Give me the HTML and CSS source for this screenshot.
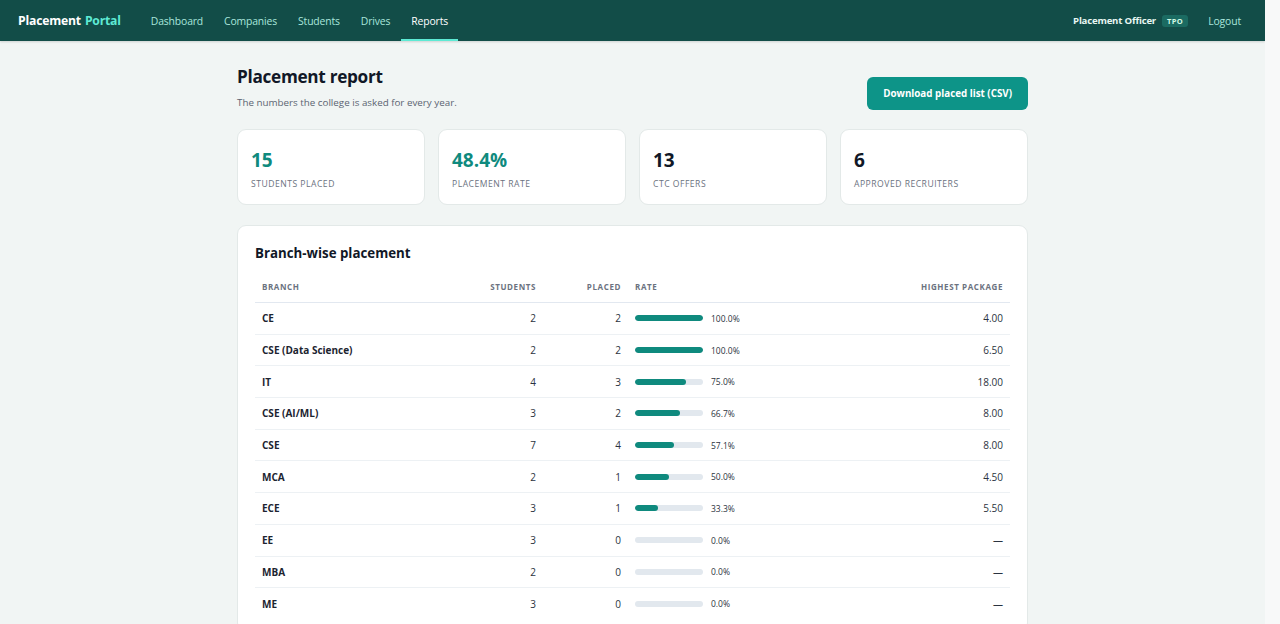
FILE: index.html
```html
<!DOCTYPE html>
<html lang="en">

<head>
  <meta charset="UTF-8">
  <meta name="viewport" content="width=device-width, initial-scale=1.0">
  <title>Placement report</title>
  <link rel="stylesheet" href="styles.css">
</head>

<body>
  <!-- Top navigation -->
  <header class="topbar">
    <div class="brand">Placement <span>Portal</span></div>
    <nav class="nav">
      <a href="#">Dashboard</a>
      <a href="#">Companies</a>
      <a href="#">Students</a>
      <a href="#">Drives</a>
      <a href="#" class="active">Reports</a>
    </nav>
    <div class="user">
      <span class="user-name">Placement Officer</span>
      <span class="role">TPO</span>
      <a href="#" class="logout">Logout</a>
    </div>
  </header>

  <main class="page">
    <div class="page-head">
      <div>
        <h1>Placement report</h1>
        <p class="sub">The numbers the college is asked for every year.</p>
      </div>
      <button class="btn">Download placed list (CSV)</button>
    </div>

    <!-- Summary cards -->
    <div class="stats">
      <div class="stat">
        <div class="stat-value teal">15</div>
        <div class="stat-label">Students placed</div>
      </div>
      <div class="stat">
        <div class="stat-value teal">48.4%</div>
        <div class="stat-label">Placement rate</div>
      </div>
      <div class="stat">
        <div class="stat-value">13</div>
        <div class="stat-label">CTC offers</div>
      </div>
      <div class="stat">
        <div class="stat-value">6</div>
        <div class="stat-label">Approved recruiters</div>
      </div>
    </div>

    <!-- Branch table -->
    <section class="card">
      <h2>Branch-wise placement</h2>
      <table class="report">
        <thead>
          <tr>
            <th class="col-branch">Branch</th>
            <th class="num">Students</th>
            <th class="num">Placed</th>
            <th class="col-rate">Rate</th>
            <th class="num">Highest package</th>
          </tr>
        </thead>
        <tbody>
          <tr>
            <td class="branch">CE</td><td class="num">2</td><td class="num">2</td>
            <td><div class="rate"><div class="bar"><div class="fill" style="width:100%"></div></div><span>100.0%</span></div></td>
            <td class="num">4.00</td>
          </tr>
          <tr>
            <td class="branch">CSE (Data Science)</td><td class="num">2</td><td class="num">2</td>
            <td><div class="rate"><div class="bar"><div class="fill" style="width:100%"></div></div><span>100.0%</span></div></td>
            <td class="num">6.50</td>
          </tr>
          <tr>
            <td class="branch">IT</td><td class="num">4</td><td class="num">3</td>
            <td><div class="rate"><div class="bar"><div class="fill" style="width:75%"></div></div><span>75.0%</span></div></td>
            <td class="num">18.00</td>
          </tr>
          <tr>
            <td class="branch">CSE (AI/ML)</td><td class="num">3</td><td class="num">2</td>
            <td><div class="rate"><div class="bar"><div class="fill" style="width:66.7%"></div></div><span>66.7%</span></div></td>
            <td class="num">8.00</td>
          </tr>
          <tr>
            <td class="branch">CSE</td><td class="num">7</td><td class="num">4</td>
            <td><div class="rate"><div class="bar"><div class="fill" style="width:57.1%"></div></div><span>57.1%</span></div></td>
            <td class="num">8.00</td>
          </tr>
          <tr>
            <td class="branch">MCA</td><td class="num">2</td><td class="num">1</td>
            <td><div class="rate"><div class="bar"><div class="fill" style="width:50%"></div></div><span>50.0%</span></div></td>
            <td class="num">4.50</td>
          </tr>
          <tr>
            <td class="branch">ECE</td><td class="num">3</td><td class="num">1</td>
            <td><div class="rate"><div class="bar"><div class="fill" style="width:33.3%"></div></div><span>33.3%</span></div></td>
            <td class="num">5.50</td>
          </tr>
          <tr>
            <td class="branch">EE</td><td class="num">3</td><td class="num">0</td>
            <td><div class="rate"><div class="bar"><div class="fill" style="width:0%"></div></div><span>0.0%</span></div></td>
            <td class="num">—</td>
          </tr>
          <tr>
            <td class="branch">MBA</td><td class="num">2</td><td class="num">0</td>
            <td><div class="rate"><div class="bar"><div class="fill" style="width:0%"></div></div><span>0.0%</span></div></td>
            <td class="num">—</td>
          </tr>
          <tr>
            <td class="branch">ME</td><td class="num">3</td><td class="num">0</td>
            <td><div class="rate"><div class="bar"><div class="fill" style="width:0%"></div></div><span>0.0%</span></div></td>
            <td class="num">—</td>
          </tr>
        </tbody>
      </table>
    </section>
  </main>
</body>

</html>
```

FILE: styles.css
```css
* {
  box-sizing: border-box;
}

html {
  background: #f8f9f9;
}

body {
  margin: 0 15px 0 0;
  font-family: 'Open Sans', 'Noto Sans', sans-serif;
  background: #f1f5f4;
  color: #1c2430;
  font-size: 12px;
}

a {
  text-decoration: none;
  color: inherit;
}

/* top bar */
.topbar {
  display: flex;
  align-items: stretch;
  height: 41px;
  padding: 0 24px 0 18px;
  background: #124d48;
  box-shadow: 0 1px 2px rgba(0, 0, 0, 0.15);
}

.brand {
  display: flex;
  align-items: center;
  font-size: 12.2px;
  font-weight: 700;
  color: #ffffff;
  margin-right: 20px;
  letter-spacing: -0.2px;
}

.brand span {
  color: #5eead4;
  margin-left: 4px;
}

.nav {
  display: flex;
  gap: 1px;
}

.nav a {
  display: flex;
  align-items: center;
  padding: 0 10px;
  font-size: 10.4px;
  letter-spacing: -0.15px;
  color: #a9e6dc;
  border-bottom: 2px solid transparent;
  padding-top: 2px;
}

.nav a.active {
  color: #ffffff;
  border-bottom-color: #5eead4;
}

.user {
  margin-left: auto;
  display: flex;
  align-items: center;
  gap: 6px;
  font-size: 10px;
}

.user-name {
  color: #e8f7f3;
  font-weight: 700;
  font-size: 9.6px;
  letter-spacing: -0.2px;
}

.role {
  background: #1b6b62;
  color: #d1fae5;
  font-size: 7.5px;
  font-weight: 700;
  padding: 1px 5px;
  border-radius: 3px;
  letter-spacing: 0.4px;
}

.logout {
  margin-left: 14px;
  font-size: 10.4px;
  letter-spacing: -0.15px;
  color: #a9e6dc;
}

/* page */
.page {
  max-width: 791px;
  margin: 0 auto;
  padding: 24px 0 48px;
}

.page-head {
  display: flex;
  justify-content: space-between;
  align-items: flex-start;
  margin-bottom: 19px;
}

h1 {
  margin: 0;
  font-size: 17.2px;
  font-weight: 700;
  color: #111827;
  letter-spacing: -0.3px;
}

.sub {
  margin: 8px 0 0;
  font-size: 9.8px;
  color: #5b6472;
}

.btn {
  margin-top: 12px;
  background: #0d9488;
  color: #ffffff;
  border: none;
  border-radius: 6px;
  height: 33px;
  padding: 0 16px;
  font-family: inherit;
  font-size: 9.8px;
  font-weight: 700;
  cursor: pointer;
}

.stats {
  display: grid;
  grid-template-columns: repeat(4, 1fr);
  gap: 13px;
  margin-bottom: 20px;
}

.stat {
  background: #ffffff;
  border: 1px solid #e3e9e8;
  border-radius: 9px;
  height: 76px;
  padding: 18px 13px;
}

.stat-value {
  font-size: 19px;
  font-weight: 700;
  line-height: 24px;
  color: #111827;
}

.stat-value.teal {
  color: #0f8a7e;
}

.stat-label {
  margin-top: 6px;
  font-size: 8.6px;
  color: #6b7280;
  text-transform: uppercase;
  letter-spacing: 0.5px;
}

.card {
  background: #ffffff;
  border: 1px solid #e3e9e8;
  border-radius: 9px;
  padding: 18px 17px 12px;
}

h2 {
  margin: 0 0 19px;
  font-size: 13.3px;
  font-weight: 700;
  color: #111827;
}

.report {
  width: 100%;
  border-collapse: collapse;
}

.report th {
  font-size: 8px;
  font-weight: 700;
  color: #6b7280;
  text-transform: uppercase;
  letter-spacing: 0.6px;
  text-align: left;
  padding: 0 7px 10px;
  border-bottom: 1px solid #e2e8f0;
}

.report td {
  font-size: 10px;
  color: #2b3340;
  padding: 0 7px;
  height: 31.7px;
  border-bottom: 1px solid #edf1f4;
}

.report tr:last-child td {
  border-bottom: none;
}

.report .num {
  text-align: right;
}

.col-branch {
  width: 221px;
}

.report th:nth-child(2) {
  width: 67px;
}

.report th:nth-child(3) {
  width: 85px;
}

.col-rate {
  width: 150px;
}

.report td.branch {
  font-weight: 700;
  color: #1c2430;
}

.rate {
  display: flex;
  align-items: center;
  gap: 8px;
  font-size: 8.5px;
}

.bar {
  width: 68px;
  height: 6px;
  border-radius: 3px;
  background: #e2e8ee;
  overflow: hidden;
}

.fill {
  height: 100%;
  background: #0f8a7e;
  border-radius: 3px;
}
```
